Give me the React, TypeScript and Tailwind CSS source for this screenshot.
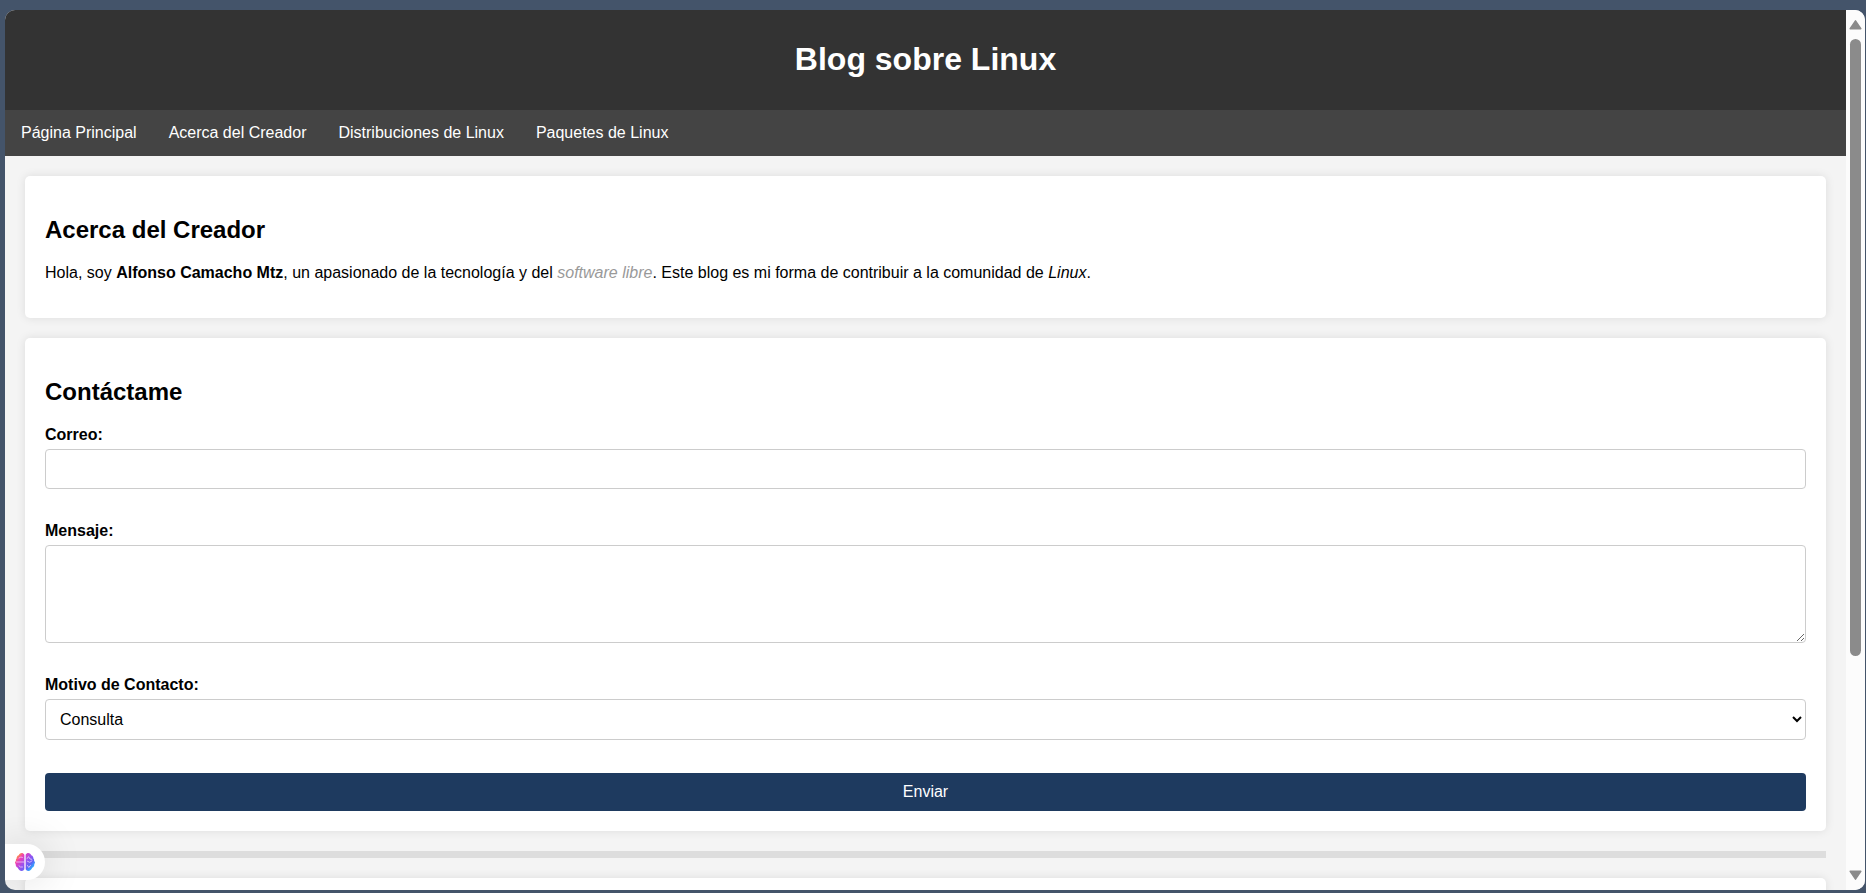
import type { ReactNode } from 'react';

const links = ['Página Principal', 'Acerca del Creador', 'Distribuciones de Linux', 'Paquetes de Linux'];

function Card({ title, children }: { title?: string; children?: ReactNode }) {
  return (
    <section className="mx-5 mt-5 rounded-[5px] bg-white p-5 shadow-[0_0_10px_rgba(0,0,0,0.1)]">
      {title && <h2 className="my-5 text-2xl leading-7 font-bold">{title}</h2>}
      {children}
    </section>
  );
}

function Brain() {
  return (
    <svg viewBox="0 0 20 18" className="h-[18px] w-5" aria-hidden="true">
      <defs>
        <linearGradient id="brain" gradientUnits="userSpaceOnUse" x1="2" y1="2" x2="18" y2="16">
          <stop offset="0" stopColor="#ffa52e" />
          <stop offset="0.22" stopColor="#f03cb4" />
          <stop offset="0.5" stopColor="#9c50ee" />
          <stop offset="0.75" stopColor="#5f63f5" />
          <stop offset="1" stopColor="#1fc0ff" />
        </linearGradient>
      </defs>
      <path
        d="M9.300 2C8.800.6 7.800 0 6.700 0 5.200 0 4.200 1 3.900 2.200 2.400 2.500 1.500 3.800 1.700 5.200.9 6 .7 7 .9 7.900-.2 8.600-.3 10 .7 10.900c-.2 1.900.6 3.200 2.100 3.900C3.500 16.800 4.900 18 6.700 18c1.200 0 2.200-.7 2.600-1.900zM10.700 2c.5-1.400 1.500-2 2.600-2 1.500 0 2.500 1 2.800 2.200 1.500.3 2.400 1.600 2.200 3 .8.800 1 1.800.8 2.700 1.100.7 1.200 2.100.2 3 .2 1.900-.6 3.200-2.100 3.900-.7 2-2.100 3.200-3.900 3.200-1.200 0-2.200-.7-2.600-1.900z"
        fill="url(#brain)"
      />
      <path
        d="M10 1.500v15"
        stroke="#d9b8f6"
        strokeWidth="1.200"
      />
      <path
        d="M1.500 9h7.500M4 5l1.800-.9 1.700.3M4 12.800l1.500 1.200H7.500M12.200 5.500l1.300-1.900 1.500 2.400 1.800.3M12.500 8.300l2.300 1 2.200-1.500M12.500 12.500l1.300 2 1.700-2.200"
        fill="none"
        stroke="#edcdfb"
        strokeWidth="0.8"
        strokeLinecap="round"
      />
    </svg>
  );
}

function Scrollbar() {
  return (
    <div className="flex w-[19px] shrink-0 flex-col items-center bg-[#fcfcfc] py-[9px] text-[#8b8b8b]" aria-hidden="true">
      <svg viewBox="0 0 13 11" className="h-[11px] w-[13px] shrink-0">
        <path d="M6.500 1.800 11.800 9.700H1.200Z" fill="currentColor" stroke="currentColor" strokeWidth="1.500" strokeLinejoin="round" />
      </svg>
      <div className="my-[9px] flex w-full grow flex-col items-center">
        <div className="h-3/4 w-[11px] rounded-full bg-[#8b8b8b]" />
      </div>
      <svg viewBox="0 0 13 11" className="h-[11px] w-[13px] shrink-0">
        <path d="M6.500 9.200 11.800 1.300H1.200Z" fill="currentColor" stroke="currentColor" strokeWidth="1.500" strokeLinejoin="round" />
      </svg>
    </div>
  );
}

export default function App() {
  const label = 'mb-[5px] block font-bold';
  const field = 'block w-full rounded-[4px] border border-[#ccc] bg-white';
  return (
    <div className="h-screen bg-[#44546a] pt-[10px] pr-px pb-[3px] pl-[5px] font-['Liberation_Sans',Arial,sans-serif] text-base leading-[18px] text-black">
      <div className="relative flex h-full overflow-hidden rounded-[10px] bg-[#f4f4f4]">
        <div className="min-w-0 flex-1 overflow-hidden">
          <header className="bg-[#333] pt-[31px] pb-[33px] text-center text-white">
            <h1 className="text-[32px] leading-9 font-bold">Blog sobre Linux</h1>
          </header>
          <nav className="flex bg-[#444] text-white">
            {links.map((text) => (
              <a key={text} href="#" className="px-4 py-[14px]">{text}</a>
            ))}
          </nav>
          <main>
            <Card title="Acerca del Creador">
              <p className="mb-4">
                Hola, soy <strong>Alfonso Camacho Mtz</strong>, un apasionado de la tecnología y del{' '}
                <em className="text-[#999]">software libre</em>. Este blog es mi forma de contribuir a la comunidad de{' '}
                <em>Linux</em>.
              </p>
            </Card>
            <Card title="Contáctame">
              <form className="flex flex-col gap-[33px]" onSubmit={(e) => e.preventDefault()}>
                <div>
                  <label htmlFor="correo" className={label}>Correo:</label>
                  <input id="correo" type="email" className={`${field} h-10 px-[10px]`} />
                </div>
                <div>
                  <label htmlFor="mensaje" className={label}>Mensaje:</label>
                  <textarea id="mensaje" className={`${field} h-[98px] resize p-[10px]`} />
                </div>
                <div>
                  <label htmlFor="motivo" className={label}>Motivo de Contacto:</label>
                  <select id="motivo" className={`${field} h-[41px] py-[10px] pl-[10px]`}>
                    <option>Consulta</option>
                  </select>
                </div>
                <button type="submit" className="rounded-[4px] bg-[#1e3a5f] py-[10px] text-white">Enviar</button>
              </form>
            </Card>
            <hr className="mx-5 mt-5 h-[7px] border-0 bg-[#ddd]" />
            <Card />
          </main>
        </div>
        <Scrollbar />
        <button
          type="button"
          aria-label="Asistente"
          className="absolute bottom-[10px] left-0 flex h-9 w-10 items-center justify-center rounded-r-full bg-white shadow-[0_0_40px_rgba(0,0,0,0.15)]"
        >
          <Brain />
        </button>
      </div>
    </div>
  );
}
